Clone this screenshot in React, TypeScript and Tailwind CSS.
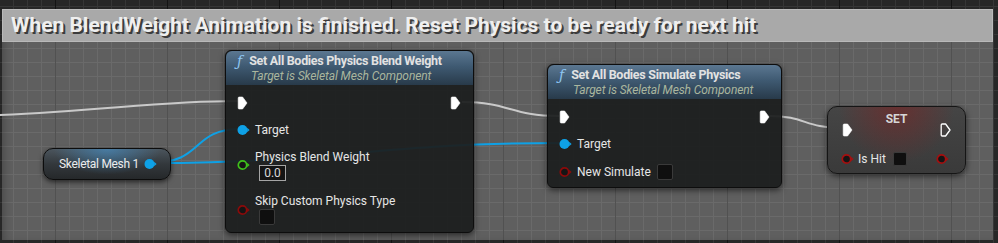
import React from "react";

const font = "font-['Roboto','Noto_Sans',sans-serif]";

function ExecPin({ hollow = false }: { hollow?: boolean }) {
  return (
    <svg width="11" height="14" viewBox="0 0 11 14" className="shrink-0">
      <path
        d="M1.2 2 Q1.2 1 2.2 1 H5.6 L10 7 L5.6 13 H2.2 Q1.2 13 1.2 12 Z"
        fill={hollow ? "none" : "#ffffff"}
        stroke="#ffffff"
        strokeWidth={hollow ? 1.3 : 0.6}
        strokeLinejoin="round"
      />
    </svg>
  );
}

function DataPin({ color, filled = false }: { color: string; filled?: boolean }) {
  return (
    <svg width="13" height="12" viewBox="0 0 13 12" className="shrink-0">
      <circle
        cx="5.5"
        cy="6"
        r={filled ? 5 : 4.2}
        fill={filled ? color : "#151515"}
        stroke={color}
        strokeWidth={filled ? 0 : 1.7}
      />
      <path d="M10.2 3.8 L12.6 6 L10.2 8.2 Z" fill={color} />
    </svg>
  );
}

function Checkbox({ size = 16 }: { size?: number }) {
  return (
    <div
      className="rounded-[2px] border border-[#3a3a3a] bg-[#0f0f0f]"
      style={{ width: size, height: size }}
    />
  );
}

function FunctionHeader({ title }: { title: string }) {
  return (
    <div className="h-[34px] rounded-t-[6px] bg-[linear-gradient(180deg,#5b7791_0%,#3f5a72_45%,#283a4a_100%)] pl-[11px] pt-[2px]">
      <div className="flex h-[16px] items-center gap-[7px]">
        <span className="font-['DejaVu_Serif',serif] text-[14px] italic leading-none text-[#8fc6f2]">
          ƒ
        </span>
        <span className="text-[12.5px] font-bold tracking-[-0.3px] text-[#e2e2e2]">
          {title}
        </span>
      </div>
      <div className="pl-[14px] text-[12px] italic leading-[15px] tracking-[-0.1px] text-[#aab69e]">
        Target is Skeletal Mesh Component
      </div>
    </div>
  );
}

export default function App() {
  return (
    <div
      className={`relative h-[243px] w-[998px] overflow-hidden bg-[#272727] ${font} bg-[linear-gradient(to_right,#141414_1px,transparent_1px),linear-gradient(to_right,#363636_1px,transparent_1px),linear-gradient(to_bottom,#363636_1px,transparent_1px)] bg-[size:112px_112px,14px_14px,14px_14px] bg-[position:55px_0px,13px_6px,13px_6px]`}
    >
      {/* comment box */}
      <div className="absolute left-[2px] top-[9px] h-[231px] w-[991px] bg-white/[0.26] shadow-[inset_6px_0_8px_-4px_rgba(0,0,0,0.25)]">
        <div className="flex h-[33px] items-center border border-[#b9b9b9] bg-[#a9a9a9] pl-[8px]">
          <span className="text-[21px] font-bold tracking-[0px] text-[#efefef] [text-shadow:2px_2px_0_#3c3c3c]">
            When BlendWeight Animation is finished. Reset Physics to be ready for next hit
          </span>
        </div>
      </div>

      {/* wires */}
      <svg className="absolute left-0 top-0" width="998" height="243">
        <path d="M0 115 C 110 110, 160 101, 238 101" stroke="#c9c9c9" strokeWidth="2" fill="none" />
        <path d="M462 102 C 510 102, 510 116, 559 116" stroke="#c9c9c9" strokeWidth="2" fill="none" />
        <path d="M770 116 C 805 116, 805 128, 842 128" stroke="#c9c9c9" strokeWidth="2" fill="none" />
        <path d="M150 163 C 205 163, 190 129, 241 129" stroke="#0ea1e6" strokeWidth="2" fill="none" />
        <path d="M150 163 C 340 163, 370 143, 563 143" stroke="#0ea1e6" strokeWidth="2" fill="none" />
      </svg>

      {/* Skeletal Mesh 1 */}
      <div className="absolute left-[43px] top-[148px] flex h-[32px] w-[128px] items-center rounded-[10px] border border-[#0c0c0c] bg-[radial-gradient(ellipse_at_50%_0%,rgba(70,150,210,0.6),transparent_60%),linear-gradient(180deg,#4b555d_0%,#33383c_50%,#25282a_100%)] pl-[15px] shadow-[0_2px_5px_rgba(0,0,0,0.6)]">
        <span className="text-[12px] tracking-[-0.3px] text-[#ececec]">Skeletal Mesh 1</span>
        <div className="ml-[5px]">
          <DataPin color="#0ea1e6" filled />
        </div>
      </div>

      {/* Node 1 */}
      <div className="absolute left-[225px] top-[50px] h-[183px] w-[249px] rounded-[6px] border border-[#0d0d0d] bg-[#1d1f1f]/[0.94] shadow-[0_2px_6px_rgba(0,0,0,0.6)]">
        <FunctionHeader title="Set All Bodies Physics Blend Weight" />
        <div className="flex flex-col pl-[11px] pr-[12px] text-[12px] text-[#e6e6e6]">
          <div className="mt-[9px] flex h-[18px] items-center justify-between">
            <ExecPin />
            <ExecPin />
          </div>
          <div className="mt-[9px] flex h-[18px] items-center gap-[5px]">
            <DataPin color="#0ea1e6" filled />
            <span>Target</span>
          </div>
          <div className="mt-[10px] flex items-center gap-[5px]">
            <DataPin color="#3fc31c" />
            <div className="flex flex-col">
              <span className="h-[16px] leading-[16px]">Physics Blend Weight</span>
              <div className="ml-[4px] flex h-[16px] w-[27px] items-center justify-center border border-[#a5a5a5] bg-[#141414] text-[12px] leading-none text-[#d8d8d8]">
                0.0
              </div>
            </div>
          </div>
          <div className="mt-[13px] flex items-center gap-[5px]">
            <DataPin color="#8c0a0a" />
            <div className="flex flex-col">
              <span className="h-[15px] leading-[15px]">Skip Custom Physics Type</span>
              <div className="ml-[4px]">
                <Checkbox />
              </div>
            </div>
          </div>
        </div>
      </div>

      {/* Node 2 */}
      <div className="absolute left-[547px] top-[64px] h-[124px] w-[235px] rounded-[6px] border border-[#0d0d0d] bg-[#1d1f1f]/[0.94] shadow-[0_2px_6px_rgba(0,0,0,0.6)]">
        <FunctionHeader title="Set All Bodies Simulate Physics" />
        <div className="flex flex-col pl-[11px] pr-[11px] text-[12px] text-[#e6e6e6]">
          <div className="mt-[9px] flex h-[18px] items-center justify-between">
            <ExecPin />
            <ExecPin />
          </div>
          <div className="mt-[9px] flex h-[18px] items-center gap-[5px]">
            <DataPin color="#0ea1e6" filled />
            <span>Target</span>
          </div>
          <div className="mt-[11px] flex h-[16px] items-center gap-[5px]">
            <DataPin color="#8c0a0a" />
            <span>New Simulate</span>
            <div className="ml-[1px]">
              <Checkbox />
            </div>
          </div>
        </div>
      </div>

      {/* SET node */}
      <div className="absolute left-[827px] top-[106px] h-[68px] w-[139px] rounded-[10px] border border-[#151515] bg-[radial-gradient(ellipse_at_50%_0%,rgba(125,35,35,0.6),transparent_60%),linear-gradient(180deg,#454545,#3a3a3a)] shadow-[0_2px_6px_rgba(0,0,0,0.6)]">
        <div className="pt-[5px] text-center text-[12px] font-bold leading-[14px] text-[#d6d6d6]">SET</div>
        <div className="mt-[-3px] flex h-[14px] items-center justify-between pl-[14px] pr-[14px]">
          <ExecPin />
          <ExecPin hollow />
        </div>
        <div className="mt-[15px] flex h-[14px] items-center pl-[13px] pr-[16px] text-[12px] text-[#e6e6e6]">
          <DataPin color="#a50f0f" />
          <span className="ml-[4px]">Is Hit</span>
          <div className="ml-[7px]">
            <Checkbox size={14} />
          </div>
          <div className="ml-auto">
            <DataPin color="#a50f0f" />
          </div>
        </div>
      </div>
    </div>
  );
}
